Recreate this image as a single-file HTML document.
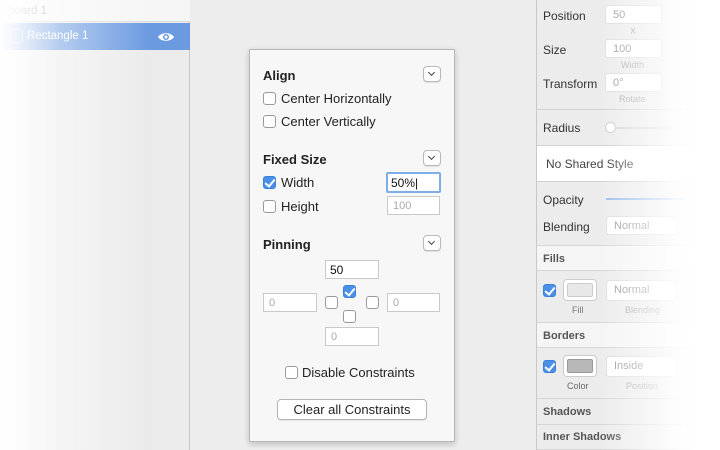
<!DOCTYPE html>
<html><head><style>
*{margin:0;padding:0;box-sizing:border-box}
body{width:720px;height:450px;overflow:hidden;background:#ededed;font-family:"Liberation Sans",sans-serif;position:relative;font-size:13px;color:#222}
.a{position:absolute}
.cb{position:absolute;width:13px;height:13px;border:1px solid #9a9a9a;border-radius:3px;background:#fff}
.cb.on{background:#4a90e8;border-color:#3b7fd8}
.cb.on:after{content:"";position:absolute;left:3px;top:0px;width:4px;height:8px;border:solid #fff;border-width:0 2px 2px 0;transform:rotate(40deg)}
.in{position:absolute;border:1px solid #c9c9c9;background:#fff;font-size:11px;color:#aaa;padding:3px 5px;height:19px}
.dd{position:absolute;width:18px;height:16px;border:1px solid #b9b9b9;border-radius:4px;background:#fff;box-shadow:0 1px 1px rgba(0,0,0,.1)}
.dd:after{content:"";position:absolute;left:5px;top:3px;width:4px;height:4px;border:solid #444;border-width:0 1.5px 1.5px 0;transform:rotate(45deg)}
.lbl{position:absolute;font-size:12px;color:#333}
.sub{position:absolute;font-size:9px;color:#aaa}
.rin{position:absolute;background:#fff;border:1px solid #ddd;border-radius:3px;font-size:11px;color:#999;padding:3px 7px;height:19px}
.hd{position:absolute;left:537px;width:183px;font-weight:bold;font-size:11px;color:#555;padding:0 6px;border-bottom:1px solid #d6d6d6}
</style></head><body>
<div class="a" style="left:0;top:0;width:190px;height:450px;background:#ebebeb;border-right:1px solid #c8c8c8"></div>
<div class="a" style="left:0;top:0;width:190px;height:22px;background:#f6f6f6;border-bottom:1px solid #ddd"></div>
<div class="a" style="left:8px;top:5px;font-size:11.5px;color:#999">board 1</div>
<div class="a" style="left:0;top:23px;width:190px;height:27px;background:#6b9ae0"></div>
<div class="a" style="left:10px;top:29px;width:13px;height:14px;border:1px solid rgba(255,255,255,.5);border-radius:2px"></div>
<div class="a" style="left:27px;top:30px;font-size:11.5px;color:#fff">Rectangle 1</div>
<svg class="a" style="left:157px;top:30px" width="18" height="14" viewBox="0 0 18 14"><path d="M1 7C4 2 14 2 17 7C14 12 4 12 1 7Z" fill="#fff"/><circle cx="9" cy="7" r="3" fill="#6b9ae0"/><circle cx="9" cy="7" r="1.5" fill="#fff"/></svg>
<div class="a" style="left:0;top:0;width:150px;height:450px;background:linear-gradient(90deg,#fff 0%,rgba(255,255,255,.9) 10%,rgba(255,255,255,.5) 40%,rgba(255,255,255,0) 100%)"></div>
<div class="a" style="left:536px;top:0;width:184px;height:450px;background:#ececec;border-left:1px solid #c8c8c8"></div>
<div class="lbl" style="left:543px;top:9px">Position</div><div class="rin" style="left:605px;top:5px;width:57px">50</div><div class="sub" style="left:630px;top:26px">X</div>
<div class="lbl" style="left:543px;top:43px">Size</div><div class="rin" style="left:605px;top:39px;width:57px">100</div><div class="sub" style="left:621px;top:60px">Width</div>
<div class="lbl" style="left:543px;top:77px">Transform</div><div class="rin" style="left:605px;top:73px;width:57px">0°</div><div class="sub" style="left:619px;top:94px">Rotate</div>
<div class="a" style="left:537px;top:109px;width:183px;border-top:1px solid #d2d2d2"></div>
<div class="lbl" style="left:543px;top:121px">Radius</div>
<div class="a" style="left:612px;top:127px;width:60px;height:2px;background:#d8d8d8"></div>
<div class="a" style="left:605px;top:122px;width:11px;height:11px;border-radius:50%;background:#fff;border:1px solid #ccc"></div>
<div class="a" style="left:537px;top:145px;width:183px;height:37px;background:#fff;border-top:1px solid #d2d2d2;border-bottom:1px solid #d2d2d2"></div>
<div class="a" style="left:546px;top:157px;font-size:12px;color:#444">No Shared Style</div>
<div class="lbl" style="left:543px;top:193px">Opacity</div>
<div class="a" style="left:606px;top:198px;width:80px;height:2px;background:#9cc0ee"></div>
<div class="lbl" style="left:543px;top:220px">Blending</div><div class="rin" style="left:606px;top:216px;width:70px">Normal</div>
<div class="hd" style="top:245px;height:26px;line-height:26px;background:#f5f5f5;border-top:1px solid #d6d6d6">Fills</div>
<div class="cb on" style="left:543px;top:284px"></div>
<div class="a" style="left:563px;top:279px;width:34px;height:22px;background:#fff;border:1px solid #ccc;border-radius:4px"><div style="margin:3px;height:14px;background:#e8e8e8;border:1px solid #ccc;border-radius:2px"></div></div>
<div class="rin" style="left:606px;top:280px;width:70px;height:21px">Normal</div>
<div class="sub" style="left:572px;top:305px;color:#777">Fill</div><div class="sub" style="left:625px;top:305px">Blending</div>
<div class="hd" style="top:322px;height:26px;line-height:26px;background:#f5f5f5;border-top:1px solid #d6d6d6">Borders</div>
<div class="cb on" style="left:543px;top:360px"></div>
<div class="a" style="left:563px;top:355px;width:34px;height:22px;background:#fff;border:1px solid #ccc;border-radius:4px"><div style="margin:3px;height:14px;background:#b8b8b8;border:1px solid #999;border-radius:2px"></div></div>
<div class="rin" style="left:606px;top:356px;width:70px;height:21px">Inside</div>
<div class="sub" style="left:567px;top:381px;color:#666">Color</div><div class="sub" style="left:626px;top:381px">Position</div>
<div class="hd" style="top:398px;height:27px;line-height:27px;border-top:1px solid #d6d6d6">Shadows</div>
<div class="hd" style="top:424px;height:26px;line-height:26px">Inner Shadows</div>
<div class="a" style="left:600px;top:0;width:120px;height:450px;background:linear-gradient(90deg,rgba(255,255,255,0) 0%,rgba(255,255,255,.9) 65%,#fff 80%)"></div>
<div class="a" style="left:249px;top:49px;width:206px;height:393px;background:#f7f7f7;border:1px solid #b8b8b8;box-shadow:0 2px 6px rgba(0,0,0,.2)"></div>
<div class="a" style="left:263px;top:68px;font-weight:bold;font-size:13px">Align</div>
<div class="dd" style="left:423px;top:66px"></div>
<div class="cb" style="left:263px;top:92px"></div><div class="a" style="left:281px;top:91px">Center Horizontally</div>
<div class="cb" style="left:263px;top:115px"></div><div class="a" style="left:281px;top:114px">Center Vertically</div>
<div class="a" style="left:263px;top:152px;font-weight:bold;font-size:13px">Fixed Size</div>
<div class="dd" style="left:423px;top:150px"></div>
<div class="cb on" style="left:263px;top:176px"></div><div class="a" style="left:281px;top:175px">Width</div>
<div class="a" style="left:386px;top:172px;width:55px;height:21px;border:2px solid #7eaee8;border-radius:2px;background:#fff;font-size:12px;color:#111;padding:2px 3px">50%|</div>
<div class="cb" style="left:263px;top:200px"></div><div class="a" style="left:281px;top:199px">Height</div>
<div class="in" style="left:387px;top:196px;width:53px">100</div>
<div class="a" style="left:263px;top:237px;font-weight:bold;font-size:13px">Pinning</div>
<div class="dd" style="left:423px;top:235px"></div>
<div class="in" style="left:325px;top:260px;width:54px;color:#111;font-size:12px;padding:2px 4px">50</div>
<div class="cb on" style="left:343px;top:285px"></div>
<div class="in" style="left:263px;top:293px;width:54px">0</div>
<div class="cb" style="left:325px;top:296px"></div>
<div class="cb" style="left:366px;top:296px"></div>
<div class="in" style="left:387px;top:293px;width:53px">0</div>
<div class="cb" style="left:343px;top:310px"></div>
<div class="in" style="left:325px;top:327px;width:54px">0</div>
<div class="cb" style="left:285px;top:366px"></div><div class="a" style="left:302px;top:365px">Disable Constraints</div>
<div class="a" style="left:277px;top:399px;width:150px;height:21px;background:#fff;border:1px solid #b5b5b5;border-radius:4px;text-align:center;line-height:19px;box-shadow:0 1px 1px rgba(0,0,0,.08)">Clear all Constraints</div>
</body></html>
